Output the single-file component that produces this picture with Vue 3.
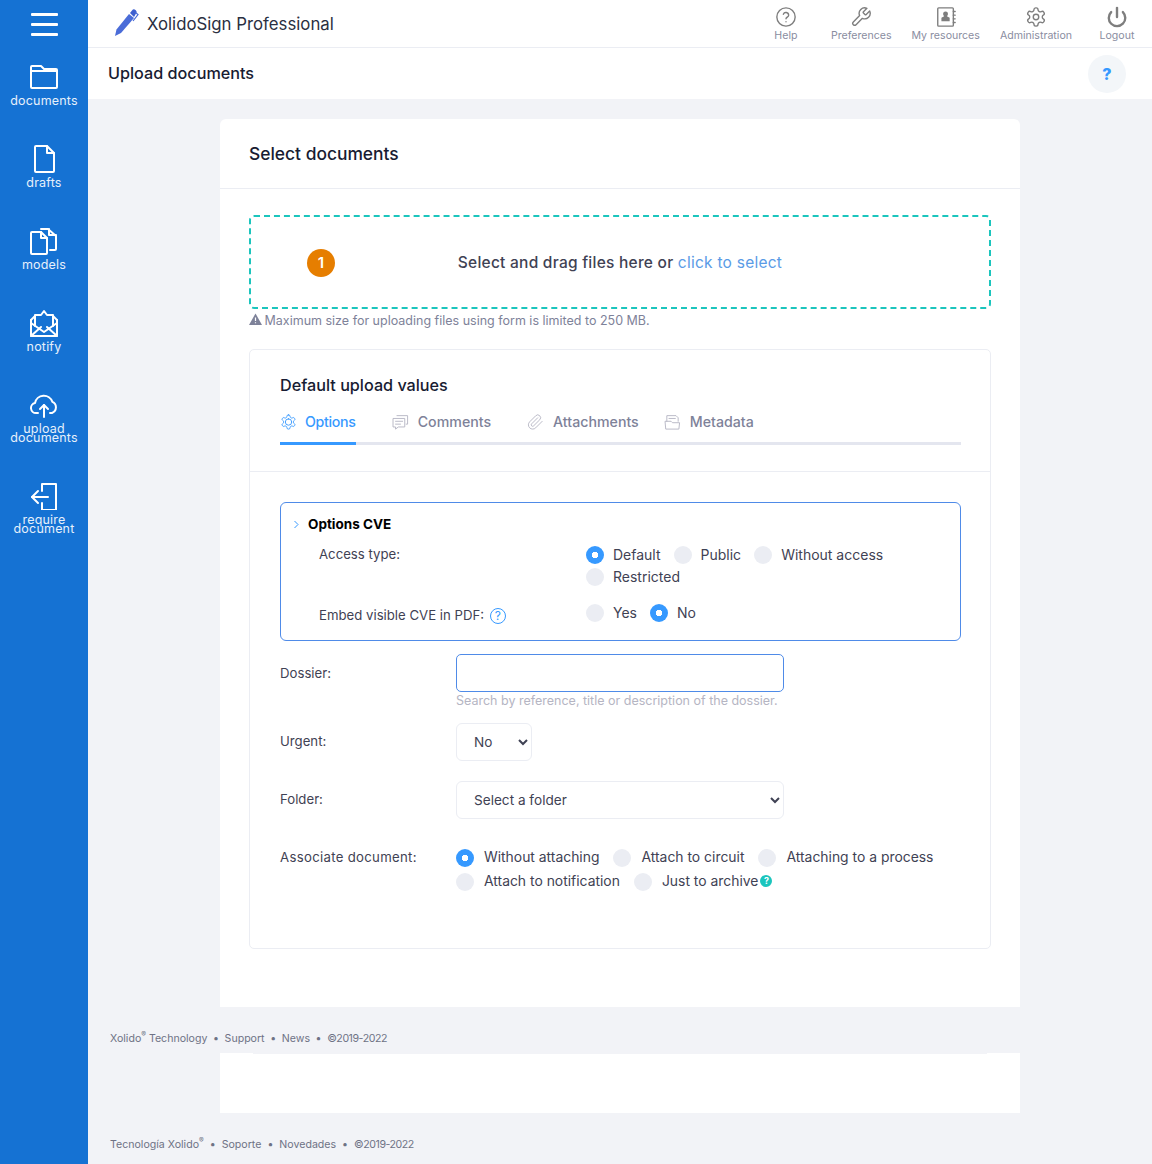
<template>
  <div class="layout">
    <aside class="sidebar">
      <div class="burger"><span></span><span></span><span></span></div>
      <a v-for="item in sideItems" :key="item.label" class="side-item">
        <svg width="28" height="28" viewBox="0 0 28 28" fill="none" stroke="#fff" stroke-width="2" stroke-linecap="round" stroke-linejoin="round">
          <path v-for="d in item.paths" :key="d" :d="d" />
        </svg>
        <span class="side-label" v-html="item.label"></span>
      </a>
    </aside>

    <div class="main">
      <header class="topbar">
        <div class="brand">
          <svg class="pen" width="26" height="28" viewBox="0 0 26 28">
            <path d="M2 27l1.5-6.5L16 5l5 4L8 24z" fill="#4a6cd8" />
            <path d="M17 4l2-2.5a2.4 2.4 0 0 1 4 3L21 8z" fill="#3d5fcf" />
            <path d="M22.5 3.5L25 5.5 20 12" fill="none" stroke="#4a6cd8" stroke-width="1.2" />
          </svg>
          <span>XolidoSign Professional</span>
        </div>
        <nav class="top-nav">
          <a v-for="item in topItems" :key="item.label" class="top-item">
            <svg width="22" height="22" viewBox="0 0 24 24" fill="none" stroke="#7e7e7e" :stroke-width="item.weight || 1.5" stroke-linecap="round" stroke-linejoin="round">
              <path v-for="d in item.paths" :key="d" :d="d" />
              <path v-if="item.solid" :d="item.solid" fill="#7e7e7e" stroke="none" />
            </svg>
            <span>{{ item.label }}</span>
          </a>
        </nav>
      </header>

      <div class="subheader">
        <h1>Upload documents</h1>
        <button class="help-btn">?</button>
      </div>

      <section class="card">
        <h2 class="card-title">Select documents</h2>
        <div class="card-body">
          <div class="dropzone">
            <span class="step">1</span>
            <p>Select and drag files here or <a>click to select</a></p>
          </div>
          <p class="size-note">
            <svg width="13" height="12" viewBox="0 0 13 12"><path d="M6.5 0.5L13 12H0z" fill="#7e8299" /><path d="M6.5 4.5v3.5M6.5 9.2v1" stroke="#fff" stroke-width="1.2" /></svg>
            Maximum size for uploading files using form is limited to 250 MB.
          </p>

          <div class="values">
            <div class="values-head">
              <h3>Default upload values</h3>
              <div class="tabs">
                <a v-for="tab in tabs" :key="tab.label" class="tab" :class="{ active: tab.active }">
                  <svg width="17" height="18" viewBox="0 0 24 24" fill="none" stroke="currentColor" stroke-width="1.3" stroke-linecap="round" stroke-linejoin="round">
                    <path v-for="d in tab.paths" :key="d" :d="d" />
                  </svg>
                  <span>{{ tab.label }}</span>
                </a>
              </div>
            </div>

            <div class="values-body">
              <div class="cve-box">
                <div class="cve-title">
                  <svg width="7" height="9" viewBox="0 0 7 9" fill="none" stroke="#3699ff" stroke-width="1"><path d="M1.5 1l3.5 3.5L1.5 8" /></svg>
                  <strong>Options CVE</strong>
                </div>
                <div class="cve-row">
                  <label class="cve-label">Access type:</label>
                  <div class="radios cve-radios">
                    <label v-for="opt in accessTypes" :key="opt" class="radio">
                      <input type="radio" name="access" :checked="opt === 'Default'" />{{ opt }}
                    </label>
                  </div>
                </div>
                <div class="cve-row embed">
                  <label class="cve-label">Embed visible CVE in PDF: <i class="hint">?</i></label>
                  <div class="radios cve-radios">
                    <label class="radio"><input type="radio" name="embed" />Yes</label>
                    <label class="radio"><input type="radio" name="embed" checked />No</label>
                  </div>
                </div>
              </div>

              <div class="form-row dossier">
                <label>Dossier:</label>
                <div>
                  <input class="text-input" type="text" />
                  <p class="help-text">Search by reference, title or description of the dossier.</p>
                </div>
              </div>
              <div class="form-row urgent">
                <label>Urgent:</label>
                <select class="select small"><option>No</option><option>Yes</option></select>
              </div>
              <div class="form-row folder">
                <label>Folder:</label>
                <select class="select"><option>Select a folder</option></select>
              </div>
              <div class="form-row associate">
                <label>Associate document:</label>
                <div class="radios assoc-radios">
                  <label v-for="opt in associateOptions" :key="opt" class="radio">
                    <input type="radio" name="assoc" :checked="opt === 'Without attaching'" />{{ opt }}
                    <i v-if="opt === 'Just to archive'" class="teal-hint">?</i>
                  </label>
                </div>
              </div>
            </div>
          </div>
        </div>
      </section>

      <footer class="foot first">
        Xolido<sup>®</sup> Technology<b>•</b>Support<b>•</b>News<b>•</b><span class="year">©2019-2022</span>
      </footer>
      <div class="blank"><div class="blank-line"></div></div>
      <footer class="foot">
        Tecnología Xolido<sup>®</sup><b>•</b>Soporte<b>•</b>Novedades<b>•</b><span class="year">©2019-2022</span>
      </footer>
    </div>
  </div>
</template>

<script setup>
const gear = 'M12.22 2h-.44a2 2 0 0 0-2 2v.18a2 2 0 0 1-1 1.73l-.43.25a2 2 0 0 1-2 0l-.15-.08a2 2 0 0 0-2.73.73l-.22.38a2 2 0 0 0 .73 2.73l.15.1a2 2 0 0 1 1 1.72v.51a2 2 0 0 1-1 1.74l-.15.09a2 2 0 0 0-.73 2.73l.22.38a2 2 0 0 0 2.73.73l.15-.08a2 2 0 0 1 2 0l.43.25a2 2 0 0 1 1 1.73V20a2 2 0 0 0 2 2h.44a2 2 0 0 0 2-2v-.18a2 2 0 0 1 1-1.73l.43-.25a2 2 0 0 1 2 0l.15.08a2 2 0 0 0 2.73-.73l.22-.39a2 2 0 0 0-.73-2.73l-.15-.08a2 2 0 0 1-1-1.74v-.5a2 2 0 0 1 1-1.74l.15-.09a2 2 0 0 0 .73-2.73l-.22-.38a2 2 0 0 0-2.73-.73l-.15.08a2 2 0 0 1-2 0l-.43-.25a2 2 0 0 1-1-1.73V4a2 2 0 0 0-2-2z'
const gearHole = 'M12 9a3 3 0 1 0 0 6 3 3 0 0 0 0-6z'

const sideItems = [
  { label: 'documents', paths: ['M1 4a1 1 0 0 1 1-1h9l3 3h12a1 1 0 0 1 1 1v17a1 1 0 0 1-1 1H2a1 1 0 0 1-1-1z', 'M1 8h26'] },
  { label: 'drafts', paths: ['M5 2a1 1 0 0 1 1-1h11l7 7v18a1 1 0 0 1-1 1H6a1 1 0 0 1-1-1z', 'M17 1v7h7'] },
  { label: 'models', paths: ['M1 6a1 1 0 0 1 1-1h9l6 6v15a1 1 0 0 1-1 1H2a1 1 0 0 1-1-1z', 'M11 5v6h6', 'M11 2h7l8 7v13a1 1 0 0 1-1 1h-5', 'M19 2v6h7'] },
  { label: 'notify', paths: ['M1 11v15a1 1 0 0 0 1 1h24a1 1 0 0 0 1-1V11', 'M1 27l10-9', 'M27 27l-10-9', 'M1 14l13 9 13-9', 'M5 17V6h6l3-4 3 4h6v11', 'M1 11l4-4', 'M27 11l-4-4'] },
  { label: 'upload<br>documents', paths: ['M8 22H6a5 5 0 0 1-1-9.9 9 9 0 0 1 17.4-1.2A6 6 0 0 1 22 22h-2', 'M14 26V14', 'M10 18l4-4 4 4'] },
  { label: 'require<br>document', paths: ['M12 9V2h14v26H12v-7', 'M2 15h16', 'M8 9l-6 6 6 6'] }
]

const topItems = [
  { label: 'Help', paths: ['M12 2a10 10 0 1 0 0 20 10 10 0 0 0 0-20z', 'M9.1 9a3 3 0 0 1 5.8 1c0 2-2.9 2.3-2.9 4', 'M12 17.2v.1'] },
  { label: 'Preferences', paths: ['M14.7 6.3a1 1 0 0 0 0 1.4l1.6 1.6a1 1 0 0 0 1.4 0l3.77-3.77a6 6 0 0 1-7.94 7.94l-6.91 6.91a2.12 2.12 0 0 1-3-3l6.91-6.91a6 6 0 0 1 7.94-7.94l-3.76 3.76z'] },
  { label: 'My resources', paths: ['M4 2h15a1 1 0 0 1 1 1v18a1 1 0 0 1-1 1H4a1 1 0 0 1-1-1V3a1 1 0 0 1 1-1z', 'M20 6h2M20 10h2M20 14h2M20 18h2'], solid: 'M11.5 6a2.6 2.6 0 0 1 2.6 2.8c0 1-.5 1.9-1.1 2.4l3 1.5V16.5H7v-3.8l3-1.5c-.6-.5-1.1-1.4-1.1-2.4A2.6 2.6 0 0 1 11.5 6z' },
  { label: 'Administration', paths: [gear, gearHole] },
  { label: 'Logout', weight: 2.6, paths: ['M12 2v10', 'M18.4 6.6a9 9 0 1 1-12.77.04'] }
]

const tabs = [
  { label: 'Options', active: true, paths: [gear, 'M12 7.5a4.5 4.5 0 1 0 0 9 4.5 4.5 0 0 0 0-9z'] },
  { label: 'Comments', paths: ['M7 3h15v12h-2', 'M2 7h16v12H9l-4 3v-3H2z', 'M5 11h10M5 15h7'] },
  { label: 'Attachments', paths: ['M21.44 11.05l-9.19 9.19a6 6 0 0 1-8.49-8.49l8.57-8.57A4 4 0 1 1 18 8.84l-8.59 8.57a2 2 0 0 1-2.83-2.83l8.49-8.48'] },
  { label: 'Metadata', paths: ['M4 11V3h13l3 3v5', 'M7 7h9', 'M2 11h8l2 2h10l-1 9H3z'] }
]

const accessTypes = ['Default', 'Public', 'Without access', 'Restricted']
const associateOptions = ['Without attaching', 'Attach to circuit', 'Attaching to a process', 'Attach to notification', 'Just to archive']
</script>

<style>
body {
  margin: 0;
  background: #f2f3f7;
}
</style>

<style scoped>
.layout {
  display: flex;
  min-height: 1164px;
  font-family: Inter, "Liberation Sans", sans-serif;
  font-size: 14px;
  color: #3f4254;
  background: #f2f3f7;
}

.sidebar {
  width: 88px;
  flex-shrink: 0;
  background: #1572d3;
}

.burger {
  height: 48px;
  display: flex;
  flex-direction: column;
  justify-content: center;
  align-items: center;
  gap: 7px;
}

.burger span {
  width: 27px;
  height: 3px;
  background: #fff;
  border-radius: 1px;
}

.side-item {
  display: flex;
  flex-direction: column;
  align-items: center;
  padding: 15px 0 25px;
  color: #fff;
}

.side-label {
  margin-top: 5px;
  font-size: 12.5px;
  line-height: 9px;
  letter-spacing: 0.2px;
  text-align: center;
  color: #e6f0fb;
}

.main {
  flex: 1;
  min-width: 0;
}

.topbar {
  height: 47px;
  display: flex;
  justify-content: space-between;
  background: #fff;
  border-bottom: 1px solid #ebedf3;
}

.brand {
  display: flex;
  align-items: center;
  gap: 8px;
  padding-left: 25px;
  font-size: 16.8px;
  color: #2b2f42;
}

.brand span {
  margin-top: 1px;
}

.pen {
  margin-top: -2px;
}

.top-nav {
  display: flex;
}

.top-item {
  min-width: 70px;
  padding: 6px 10px 0;
  box-sizing: border-box;
  display: flex;
  flex-direction: column;
  align-items: center;
  font-size: 10.6px;
  line-height: 13px;
  color: #8a8d9f;
}

.top-item span {
  margin-top: 1px;
  white-space: nowrap;
}

.subheader {
  height: 51px;
  display: flex;
  align-items: center;
  justify-content: space-between;
  padding: 0 26px 0 20px;
  background: #fff;
}

h1, h2, h3, p {
  margin: 0;
}

.subheader h1 {
  margin-bottom: 1px;
  font-size: 16.2px;
  font-weight: 500;
  color: #181c32;
}

.help-btn {
  width: 38px;
  height: 38px;
  border: 0;
  border-radius: 50%;
  background: #f3f6f9;
  color: #3699ff;
  font-family: inherit;
  font-size: 16px;
  font-weight: 800;
}

.card {
  width: 800px;
  margin: 20px 0 0 132px;
  background: #fff;
  border-radius: 6px 6px 0 0;
}

.card-title {
  height: 69px;
  line-height: 69px;
  padding-left: 29px;
  font-size: 17.4px;
  font-weight: 500;
  color: #181c32;
  border-bottom: 1px solid #ebedf3;
}

.card-body {
  padding: 26px 29px 58px;
}

.dropzone {
  height: 94px;
  box-sizing: border-box;
  position: relative;
  display: flex;
  align-items: center;
  justify-content: center;
  border: 2px dashed #1bc5bd;
  border-radius: 5px;
  font-size: 15.5px;
  letter-spacing: 0.25px;
  font-weight: 500;
  color: #3f4254;
}

.dropzone a {
  color: #5a9be6;
  font-weight: 400;
}

.step {
  position: absolute;
  left: 56px;
  top: 32px;
  width: 28px;
  height: 28px;
  line-height: 28px;
  text-align: center;
  border-radius: 50%;
  background: #e67e00;
  color: #fff;
  font-weight: 600;
  font-size: 15px;
}

.size-note {
  height: 40px;
  padding-top: 4px;
  box-sizing: border-box;
  font-size: 12.5px;
  color: #7e8299;
  white-space: nowrap;
}

.size-note svg {
  margin-right: -1px;
}

.values {
  height: 600px;
  box-sizing: border-box;
  border: 1px solid #ebedf3;
  border-radius: 5px;
}

.values-head {
  height: 122px;
  box-sizing: border-box;
  padding: 25px 29px 0 30px;
  border-bottom: 1px solid #ebedf3;
}

.values-head h3 {
  font-size: 16.2px;
  line-height: 20px;
  font-weight: 500;
  color: #181c32;
}

.tabs {
  display: flex;
  margin-top: 14px;
  border-bottom: 3px solid #e4e6ef;
}

.tab {
  position: relative;
  display: flex;
  align-items: flex-start;
  gap: 9px;
  height: 33px;
  margin-right: 36px;
  font-weight: 500;
  font-size: 14.2px;
  line-height: 26px;
  color: #7e8299;
}

.tab:nth-child(3) {
  margin-right: 25px;
}

.tab svg {
  margin-top: 4px;
  color: #b5b5c3;
}

.tab.active {
  gap: 8px;
  letter-spacing: -0.3px;
  color: #3699ff;
}

.tab.active svg {
  color: #3699ff;
}

.tab.active::after {
  content: "";
  position: absolute;
  left: 0;
  right: 0;
  bottom: -3px;
  height: 3px;
  background: #3699ff;
}

.values-body {
  padding: 30px 29px 0 30px;
}

.cve-box {
  height: 139px;
  box-sizing: border-box;
  border: 1px solid #4f8be8;
  border-radius: 6px;
  padding: 11px 0 0 12px;
}

.cve-title {
  display: flex;
  align-items: center;
  gap: 8px;
  height: 20px;
  font-size: 13.5px;
  color: #000;
}

.cve-title strong {
  font-weight: 700;
}

.cve-row {
  display: flex;
  margin-top: 12px;
  padding-left: 26px;
}

.cve-row.embed {
  margin-top: 18px;
}

.cve-label {
  width: 267px;
  flex-shrink: 0;
  font-size: 13.2px;
  line-height: 16px;
}

.embed .cve-label {
  line-height: 22px;
}

.hint {
  display: inline-block;
  width: 14px;
  height: 14px;
  line-height: 14px;
  margin-left: 2px;
  border: 1px solid #3699ff;
  border-radius: 50%;
  color: #3699ff;
  font-size: 12px;
  font-style: normal;
  text-align: center;
}

.radios {
  display: flex;
  flex-wrap: wrap;
}

.cve-radios {
  width: 320px;
  row-gap: 4px;
}

.assoc-radios {
  width: 500px;
  row-gap: 6px;
  font-size: 13.9px;
}

.radio {
  display: flex;
  align-items: center;
  gap: 9px;
  height: 18px;
  padding-bottom: 2px;
  box-sizing: border-box;
  margin-right: 13px;
  white-space: nowrap;
}

.assoc-radios .radio {
  gap: 10px;
  margin-right: 14px;
}

.radio input {
  appearance: none;
  flex-shrink: 0;
  width: 18px;
  height: 18px;
  margin: 0 0 -2px;
  border-radius: 50%;
  background: #ebedf3;
}

.radio input:checked {
  background: radial-gradient(circle, #fff 0 3px, #3699ff 3.5px);
}

.teal-hint {
  width: 12px;
  height: 12px;
  line-height: 12px;
  margin-left: -8px;
  border-radius: 50%;
  background: #1bc5bd;
  color: #fff;
  font-size: 9px;
  font-weight: 700;
  font-style: normal;
  text-align: center;
}

.form-row {
  display: flex;
}

.form-row > label {
  width: 176px;
  flex-shrink: 0;
  font-size: 13.2px;
}

.dossier {
  margin-top: 13px;
}

.dossier > label {
  padding-top: 11px;
}

.text-input {
  display: block;
  width: 328px;
  height: 38px;
  box-sizing: border-box;
  border: 1px solid #4f8be8;
  border-radius: 5px;
  background: #fff;
  outline: none;
}

.help-text {
  font-size: 12.5px;
  line-height: 18px;
  color: #b5b5c3;
  white-space: nowrap;
}

.urgent {
  margin-top: 13px;
}

.urgent > label,
.folder > label {
  padding-top: 10px;
}

.select {
  width: 328px;
  height: 38px;
  padding-left: 13px;
  box-sizing: border-box;
  border: 1px solid #ebedf3;
  border-radius: 6px;
  background: #fff;
  color: #3f4254;
  font-family: inherit;
  font-size: 13.6px;
}

.select.small {
  width: 76px;
}

.folder {
  margin-top: 20px;
}

.associate {
  margin-top: 30px;
}

.associate > label {
  letter-spacing: 0.3px;
}

.foot {
  height: 46px;
  box-sizing: border-box;
  padding: 25px 0 0 22px;
  font-size: 10.6px;
  line-height: 14px;
  color: #6e7285;
}

.foot:last-child {
  height: 51px;
}

.foot b {
  margin: 0 6px;
  font-weight: 400;
}

.foot.first b {
  margin: 0 5.6px;
}

.foot sup {
  font-size: 7px;
  line-height: 0;
}

.year {
  letter-spacing: -0.45px;
}

.blank {
  width: 800px;
  height: 60px;
  margin-left: 132px;
  background: #fff;
}

.blank-line {
  height: 1px;
  margin: 0 33px;
  background: #f2f3f7;
}
</style>
